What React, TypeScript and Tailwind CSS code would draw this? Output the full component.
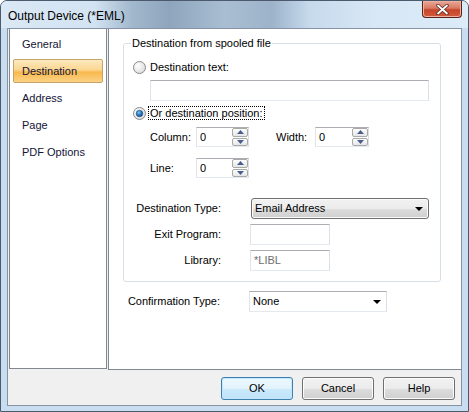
import React from 'react'

// Vista-style "Output Device" dialog

function Radio({ checked }: { checked?: boolean }) {
  return (
    <svg width="13" height="13" viewBox="0 0 13 13" className="shrink-0">
      <defs>
        <radialGradient id={checked ? 'rg-on' : 'rg-off'} cx="0.35" cy="0.35" r="0.8">
          <stop offset="0" stopColor="#ffffff" />
          <stop offset="1" stopColor="#d6d6d6" />
        </radialGradient>
        <radialGradient id="dot" cx="0.4" cy="0.35" r="0.7">
          <stop offset="0" stopColor="#7fc6f2" />
          <stop offset="0.5" stopColor="#2d7ec4" />
          <stop offset="1" stopColor="#0f3f7a" />
        </radialGradient>
      </defs>
      <circle cx="6.5" cy="6.5" r="6" fill={`url(#${checked ? 'rg-on' : 'rg-off'})`} stroke="#8b8b8b" strokeWidth="1" />
      {checked && <circle cx="6.5" cy="6.5" r="3.3" fill="url(#dot)" stroke="#1d4f86" strokeWidth="0.6" />}
    </svg>
  )
}

function Arrow({ up }: { up?: boolean }) {
  return (
    <svg width="7" height="4" viewBox="0 0 7 4">
      <path d={up ? 'M0 4 L3.5 0 L7 4 Z' : 'M0 0 L7 0 L3.5 4 Z'} fill="#4a5d8a" />
    </svg>
  )
}

function SpinBox({ value, w }: { value: string; w: string }) {
  return (
    <div className={`${w} h-[20px] flex bg-white border border-[#abadb3] border-b-[#e3e9ef] border-l-[#e2e3ea] border-r-[#dbdfe6]`}>
      <div className="flex-1 pl-[3px] flex items-center">{value}</div>
      <div className="w-[16px] flex flex-col gap-[1px] p-[0px]">
        <div className="flex-1 flex items-center justify-center border border-[#a9a9a9] rounded-[2px] bg-[linear-gradient(#fdfdfd,#e6e6e6)]">
          <Arrow up />
        </div>
        <div className="flex-1 flex items-center justify-center border border-[#a9a9a9] rounded-[2px] bg-[linear-gradient(#fdfdfd,#e6e6e6)]">
          <Arrow />
        </div>
      </div>
    </div>
  )
}

function TextBox({ w, value, muted }: { w: string; value?: string; muted?: boolean }) {
  return (
    <div className={`${w} h-[21px] flex items-center pl-[3px] bg-white border border-[#abadb3] border-b-[#e3e9ef] border-l-[#e2e3ea] border-r-[#dbdfe6] ${muted ? 'text-[#6d6d6d]' : ''}`}>
      {value}
    </div>
  )
}

function DropArrow() {
  return (
    <svg width="8" height="4" viewBox="0 0 8 4" className="shrink-0">
      <path d="M0 0 L8 0 L4 4 Z" fill="#000" />
    </svg>
  )
}

const navItems = ['General', 'Destination', 'Address', 'Page', 'PDF Options']

function VistaButton({ label, primary }: { label: string; primary?: boolean }) {
  return (
    <button
      className={`w-[72px] h-[23px] rounded-[3px] border text-center ${
        primary
          ? 'border-[#3c7fb1] bg-[linear-gradient(#eef8fe_0%,#e2f3fd_50%,#cbe9fb_51%,#bfe3f9_100%)] shadow-[inset_0_0_0_1px_#c2e8fd]'
          : 'border-[#707070] bg-[linear-gradient(#f2f2f2_0%,#ebebeb_50%,#dddddd_51%,#cfcfcf_100%)] shadow-[inset_0_0_0_1px_#fcfcfc]'
      }`}
    >
      {label}
    </button>
  )
}

export default function App() {
  return (
    <div className="w-[469px] h-[412px] flex flex-col border border-[#4b5a6c] rounded-t-[7px] overflow-hidden bg-[#c9ddf1] font-['Liberation_Sans',Arial,sans-serif] text-[11px] text-black leading-[13px]">
      {/* title bar */}
      <div className="h-[27px] flex items-start bg-[linear-gradient(to_right,#dbe8f5_0%,#d2e3f2_20%,#a2b8cd_28%,#8ea5bd_36%,#a9bed2_48%,#9db3ca_58%,#c6daec_66%,#d8e7f5_80%,#dcebf8_100%)]">
        <div className="pl-[7px] pt-[8px] text-[12px] leading-[14px] text-black">Output Device (*EML)</div>
        <div className="ml-auto mr-[6px] w-[40px] h-[17px] rounded-b-[4px] border border-t-0 border-[#5b2317] bg-[linear-gradient(#e9a897_0%,#d97a63_45%,#c7452b_55%,#d25b3c_100%)] flex items-center justify-center shadow-[inset_0_0_0_1px_#eeb0a0]">
          <svg width="13" height="11" viewBox="0 0 13 11">
            <path d="M2 1.5 L11 9.5 M11 1.5 L2 9.5" stroke="#5a2a22" strokeWidth="3.4" strokeLinecap="round" />
            <path d="M2 1.5 L11 9.5 M11 1.5 L2 9.5" stroke="#ffffff" strokeWidth="1.8" strokeLinecap="round" />
          </svg>
        </div>
      </div>

      {/* client area */}
      <div className="mx-[6px] h-[378px] flex flex-col border border-[#8593a5] bg-[#f0f0f0]">
        <div className="h-[341px] flex">
          {/* nav list */}
          <div className="ml-[1px] w-[98px] h-[340px] bg-white border-l border-r border-b border-[#828790] pt-[3px] px-[3px] flex flex-col gap-[3px]">
            {navItems.map(item => (
              <div
                key={item}
                className={`h-[24px] flex items-center pl-[8px] text-[#141438] ${
                  item === 'Destination'
                    ? 'border border-[#c3a46b] rounded-[2px] bg-[linear-gradient(#fde9bf_0%,#fbd690_45%,#f8b94d_55%,#fcd285_100%)]'
                    : 'border border-transparent'
                }`}
              >
                {item}
              </div>
            ))}
          </div>

          {/* content panel */}
          <div className="ml-[1px] flex-1 bg-white border-l border-b border-[#828790] pl-[14px] pt-[8px]">
            <fieldset className="w-[318px] border border-[#d5dfe5] rounded-[3px] p-0 m-0 pb-[10px]">
              <legend className="ml-[7px] px-[1px]">Destination from spooled file</legend>

              <div className="mt-[11px] pl-[9px] h-[13px] flex items-center gap-[4px]">
                <Radio />
                <span>Destination text:</span>
              </div>

              <div className="mt-[6px] ml-[26px]">
                <TextBox w="w-[279px]" />
              </div>

              <div className="mt-[5px] pl-[9px] h-[14px] flex items-center gap-[2px]">
                <Radio checked />
                <span className="px-[1px] h-[14px] flex items-center border border-dotted border-black">Or destination position:</span>
              </div>

              <div className="mt-[7px] ml-[26px] flex items-center">
                <span className="w-[46px]">Column:</span>
                <SpinBox value="0" w="w-[53px]" />
                <span className="ml-[27px] w-[39px]">Width:</span>
                <SpinBox value="0" w="w-[54px]" />
              </div>

              <div className="mt-[11px] ml-[26px] flex items-center">
                <span className="w-[46px]">Line:</span>
                <SpinBox value="0" w="w-[53px]" />
              </div>

              <div className="mt-[20px] flex items-center">
                <span className="w-[97px] text-right">Destination Type:</span>
                <div className="ml-[30px] w-[178px] h-[21px] rounded-[3px] border border-[#707070] bg-[linear-gradient(#f2f2f2_0%,#ebebeb_50%,#dddddd_51%,#cfcfcf_100%)] shadow-[inset_0_0_0_1px_#fbfbfb] flex items-center pl-[3px] pr-[5px]">
                  <span className="flex-1">Email Address</span>
                  <DropArrow />
                </div>
              </div>

              <div className="mt-[5px] flex items-center">
                <span className="w-[97px] text-right">Exit Program:</span>
                <div className="ml-[29px]">
                  <TextBox w="w-[80px]" />
                </div>
              </div>

              <div className="mt-[5px] flex items-center">
                <span className="w-[97px] text-right">Library:</span>
                <div className="ml-[29px]">
                  <TextBox w="w-[80px]" value="*LIBL" muted />
                </div>
              </div>
            </fieldset>

            <div className="mt-[9px] flex items-center">
              <span className="w-[97px] text-right">Confirmation Type:</span>
              <div className="ml-[29px] w-[138px] h-[21px] bg-white border border-[#abadb3] border-b-[#e3e9ef] border-l-[#e2e3ea] border-r-[#dbdfe6] flex items-center pl-[3px] pr-[5px]">
                <span className="flex-1">None</span>
                <DropArrow />
              </div>
            </div>
          </div>
        </div>

        {/* buttons */}
        <div className="flex-1 flex justify-end items-start pt-[7px] pr-[6px] gap-[9px]">
          <VistaButton label="OK" primary />
          <VistaButton label="Cancel" />
          <VistaButton label="Help" />
        </div>
      </div>
    </div>
  )
}
